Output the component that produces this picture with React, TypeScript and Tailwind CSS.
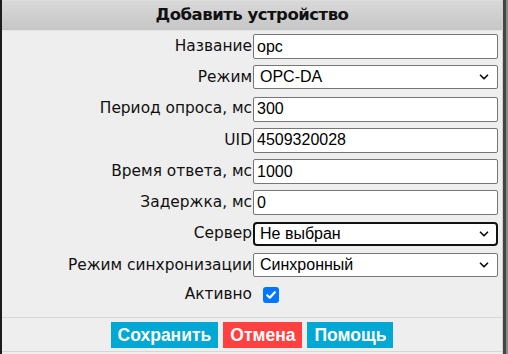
import { ChevronDown } from "lucide-react";

const LABEL_FONT = { fontFamily: '"DejaVu Sans", sans-serif' };

function TextRow({ label, value }: { label: string; value: string }) {
  return (
    <>
      <label className="flex h-[25px] items-center justify-end text-[15.4px] leading-none text-[#111]">
        {label}
      </label>
      <input
        readOnly
        value={value}
        className="h-[25px] w-[245px] rounded-[2px] border border-[#767676] bg-white px-[3px] font-['Liberation_Sans',sans-serif] text-[16px] text-black outline-none"
      />
    </>
  );
}

function SelectRow({ label, value, focused }: { label: string; value: string; focused?: boolean }) {
  return (
    <>
      <label className="flex h-[25px] items-center justify-end text-[15.4px] leading-none text-[#111]">
        {label}
      </label>
      <div
        className={
          focused
            ? "flex h-[24px] w-[245px] items-center justify-between rounded-[4px] border-2 border-[#111] bg-white pl-[5px] pr-[5px]"
            : "flex h-[24px] w-[245px] items-center justify-between rounded-[2px] border border-[#767676] bg-white pl-[6px] pr-[6px]"
        }
      >
        <span className="font-['Liberation_Sans',sans-serif] text-[16px] text-black">{value}</span>
        <ChevronDown size={14} strokeWidth={3} className="text-[#111]" />
      </div>
    </>
  );
}

export default function App() {
  return (
    <div className="flex h-[354px] w-[508px] overflow-hidden bg-[#eeeeee]" style={LABEL_FONT}>
      <div className="flex w-[503px] flex-col border-l-2 border-r border-l-[#1c1c1c] border-r-[#cfcfcf] bg-[#eeeeee]">
        <header className="flex h-[31px] items-center justify-center border-b border-[#e4e4e4] border-t border-t-[#dedede] bg-gradient-to-b from-[#d8d8d8] to-[#c6c6c6]">
          <h1 className="text-[16.5px] font-bold tracking-[-0.5px] text-[#111]">Добавить устройство</h1>
        </header>

        <div className="grid grid-cols-[250px_245px] gap-x-[1px] gap-y-[6.25px] pt-[3px]">
          <TextRow label="Название" value="opc" />
          <SelectRow label="Режим" value="OPC-DA" />
          <TextRow label="Период опроса, мс" value="300" />
          <TextRow label="UID" value="4509320028" />
          <TextRow label="Время ответа, мс" value="1000" />
          <TextRow label="Задержка, мс" value="0" />
          <SelectRow label="Сервер" value="Не выбран" focused />
          <SelectRow label="Режим синхронизации" value="Синхронный" />
          <label className="flex h-[22px] items-center justify-end text-[15.4px] leading-none text-[#111]">
            Активно
          </label>
          <div className="flex h-[22px] items-center">
            <span className="ml-[10px] flex h-[16px] w-[16px] items-center justify-center rounded-[3px] bg-[#0075ff]">
              <svg width="12" height="12" viewBox="0 0 12 12" fill="none">
                <path d="M2.2 6.3 L4.8 8.8 L9.8 3.2" stroke="white" strokeWidth="2.2" strokeLinecap="round" strokeLinejoin="round" />
              </svg>
            </span>
          </div>
        </div>

        <div className="mt-[11px] border-t border-[#d6d6d6] pb-[3px] pt-[4px]">
          <div className="flex justify-center gap-[5px] font-['Liberation_Sans',sans-serif] text-[17.5px] font-bold text-white">
            <button className="h-[26px] bg-[#00a8d3] px-[7px]">Сохранить</button>
            <button className="h-[26px] bg-[#ff4141] px-[7px]">Отмена</button>
            <button className="h-[26px] bg-[#00a8d3] px-[7px]">Помощь</button>
          </div>
        </div>
        <div className="border-t border-[#d6d6d6]" />
      </div>
      <div className="w-[3px] bg-[#454545]" />
      <div className="w-[2px] bg-[#8a8a8a]" />
    </div>
  );
}
